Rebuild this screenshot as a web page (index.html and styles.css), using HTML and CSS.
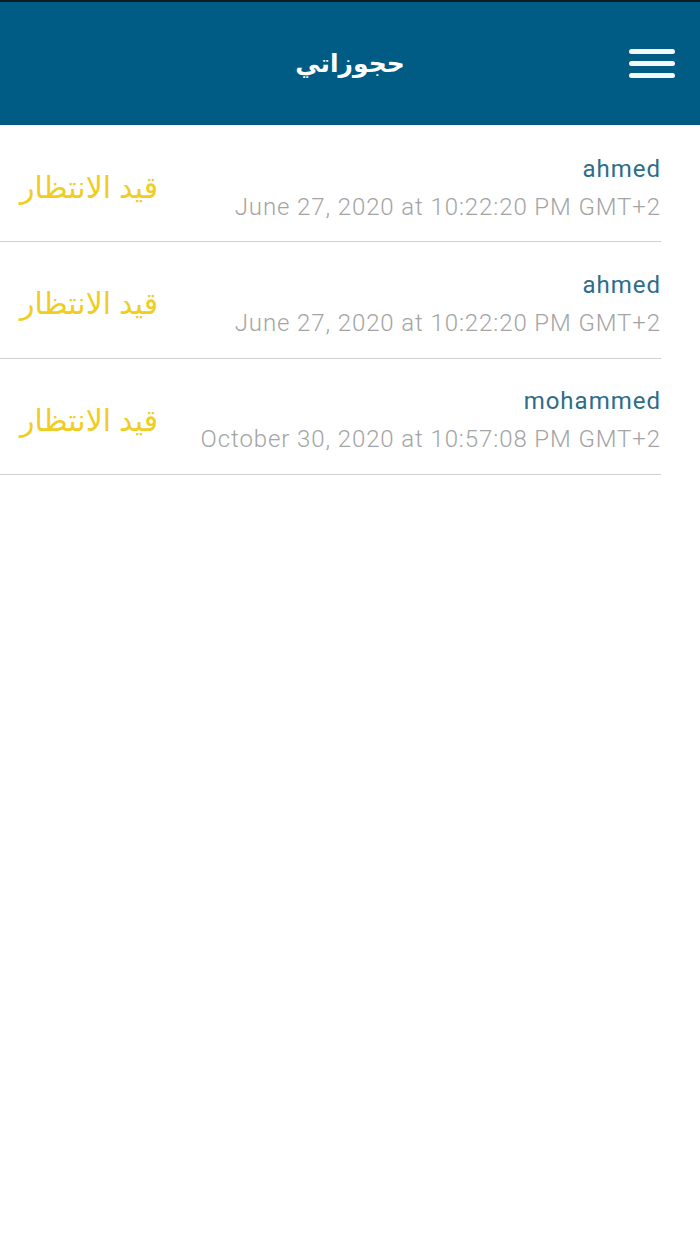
FILE: index.html
```html
<!DOCTYPE html>
<html lang="ar">
<head>
<meta charset="utf-8">
<title>حجوزاتي</title>
<link rel="stylesheet" href="styles.css">
</head>
<body>
<div class="statusbar"></div>
<header class="appbar">
  <h1 class="title">حجوزاتي</h1>
  <button class="menu" aria-label="menu">
    <svg width="46" height="32" viewBox="0 0 46 32">
      <rect x="0" y="0" width="46" height="5" rx="2.5" fill="#f2f7fa"/>
      <rect x="0" y="12" width="46" height="5" rx="2.5" fill="#f2f7fa"/>
      <rect x="0" y="24" width="46" height="5" rx="2.5" fill="#f2f7fa"/>
    </svg>
  </button>
</header>
<main class="list">
  <div class="row">
    <div class="status">قيد الانتظار</div>
    <div class="info">
      <div class="name">ahmed</div>
      <div class="date">June 27, 2020 at 10:22:20 PM GMT+2</div>
    </div>
  </div>
  <div class="row">
    <div class="status">قيد الانتظار</div>
    <div class="info">
      <div class="name">ahmed</div>
      <div class="date">June 27, 2020 at 10:22:20 PM GMT+2</div>
    </div>
  </div>
  <div class="row">
    <div class="status">قيد الانتظار</div>
    <div class="info">
      <div class="name">mohammed</div>
      <div class="date">October 30, 2020 at 10:57:08 PM GMT+2</div>
    </div>
  </div>
</main>
</body>
</html>
```
FILE: styles.css
```css
html, body {
  margin: 0;
  padding: 0;
  background: #ffffff;
  font-family: "Roboto", "Noto Sans", sans-serif;
}
.statusbar {
  height: 2px;
  background: #0b1c26;
}
.appbar {
  height: 123px;
  background: #005b85;
  position: relative;
  display: flex;
  align-items: center;
  justify-content: center;
}
.title {
  margin: 0;
  color: #ffffff;
  font-family: "Noto Sans", "DejaVu Sans", sans-serif;
  font-weight: 700;
  font-size: 25px;
  line-height: 1;
  padding-bottom: 2px;
}
.menu {
  position: absolute;
  right: 25px;
  top: 47px;
  padding: 0;
  border: 0;
  background: none;
  line-height: 0;
}
.list {
  width: 661px;
  padding-top: 1px;
}
.row {
  height: 116.3px;
  box-sizing: border-box;
  border-bottom: 1.5px solid #d0d0d0;
  display: flex;
  align-items: center;
  justify-content: space-between;
}
.status {
  padding-left: 20px;
  color: #f0cd22;
  font-family: "Noto Sans", "DejaVu Sans", sans-serif;
  font-size: 30px;
  padding-top: 6px;
}
.info {
  text-align: right;
  padding-top: 8px;
}
.name {
  color: #2d6d89;
  font-size: 24px;
  letter-spacing: 1px;
  line-height: 38px;
}
.date {
  color: #a4a4a4;
  font-size: 24px;
  font-weight: 300;
  letter-spacing: 0.9px;
  line-height: 38px;
}
```
